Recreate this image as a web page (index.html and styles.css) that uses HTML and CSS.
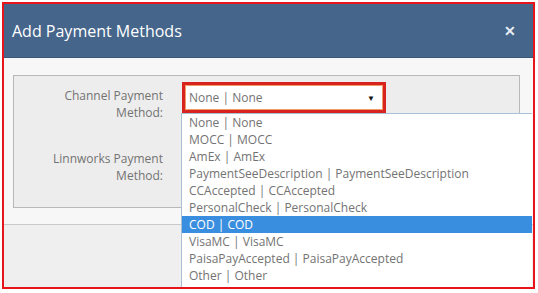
FILE: index.html
```html
<!DOCTYPE html>
<html lang="en">
<head>
  <link rel="stylesheet" href="styles.css">
</head>
<body>

  <div class="modal">
    <div class="modal-header">
      <span class="modal-title">Add Payment Methods</span>
      <span class="close">&#x2715;</span>
    </div>

    <div class="modal-body">
      <div class="panel">
        <div class="row">
          <label class="row-label">Channel Payment<br>Method:</label>
          <div class="field">
            <div class="select highlighted">
              <span>None | None</span>
              <span class="arrow">&#9660;</span>
            </div>
            <ul class="options">
              <li>None | None</li>
              <li>MOCC | MOCC</li>
              <li>AmEx | AmEx</li>
              <li>PaymentSeeDescription | PaymentSeeDescription</li>
              <li>CCAccepted | CCAccepted</li>
              <li>PersonalCheck | PersonalCheck</li>
              <li class="active">COD | COD</li>
              <li>VisaMC | VisaMC</li>
              <li>PaisaPayAccepted | PaisaPayAccepted</li>
              <li>Other | Other</li>
            </ul>
          </div>
        </div>

        <div class="row">
          <label class="row-label">Linnworks Payment<br>Method:</label>
          <div class="field">
            <div class="select"></div>
          </div>
        </div>
      </div>
    </div>

    <div class="modal-footer"></div>
  </div>

</body>
</html>
```

FILE: styles.css
```css
body {
  margin: 0;
  font-family: "Open Sans", Arial, sans-serif;
  background-color: #ffffff;
}

.modal {
  margin: 2px;
  width: 529px;
  height: 283px;
  border: 2px solid #e8141b;
  background-color: #f7f7f7;
  overflow: hidden;
  display: flex;
  flex-direction: column;
}

.modal-header {
  height: 53px;
  background-color: #45658b;
  color: white;
  display: flex;
  align-items: center;
  justify-content: space-between;
  padding: 0 17px 0 8px;
  border-bottom: 1px solid #3b587a;
}

.modal-title {
  font-size: 16px;
  margin-top: 1px;
}

.close {
  font-size: 14px;
  font-weight: bold;
  color: #e9eef4;
}

.modal-body {
  padding: 17px 13px 16px 9px;
  border-bottom: 1px solid #c9c9c9;
}

.panel {
  height: 133px;
  border: 1px solid #b8b8b8;
  background-color: #ededed;
  padding: 6px 0 0 0;
  box-sizing: border-box;
}

.row {
  display: flex;
  gap: 19px;
  margin-bottom: 24px;
  height: 39px;
}

.row-label {
  width: 149px;
  text-align: right;
  color: #737373;
  font-size: 12px;
  line-height: 17px;
  padding-top: 5px;
}

.field {
  position: relative;
}

.select {
  width: 186px;
  height: 25px;
  box-sizing: content-box;
  border: 3px solid #ffffff;
  background-color: white;
  display: flex;
  align-items: center;
  justify-content: space-between;
  padding: 0 8px 0 4px;
  font-size: 12px;
  color: #737373;
}

.select.highlighted {
  border-color: #d8241f;
  box-shadow: inset 0 0 0 1px #f39a6b;
}

.arrow {
  font-size: 8px;
  color: #111;
}

.options {
  position: absolute;
  left: -1px;
  top: 31px;
  width: 350px;
  margin: 0;
  padding: 0 0 4px 0;
  list-style: none;
  background-color: white;
  border: 1px solid #a9bfd6;
  border-right: none;
  z-index: 2;
}

.options li {
  font-size: 12px;
  line-height: 17px;
  padding-left: 7px;
  color: #737373;
}

.options li.active {
  background-color: #3a8ee0;
  color: white;
}

.modal-footer {
  flex: 1;
  background-color: #efefef;
}
```
